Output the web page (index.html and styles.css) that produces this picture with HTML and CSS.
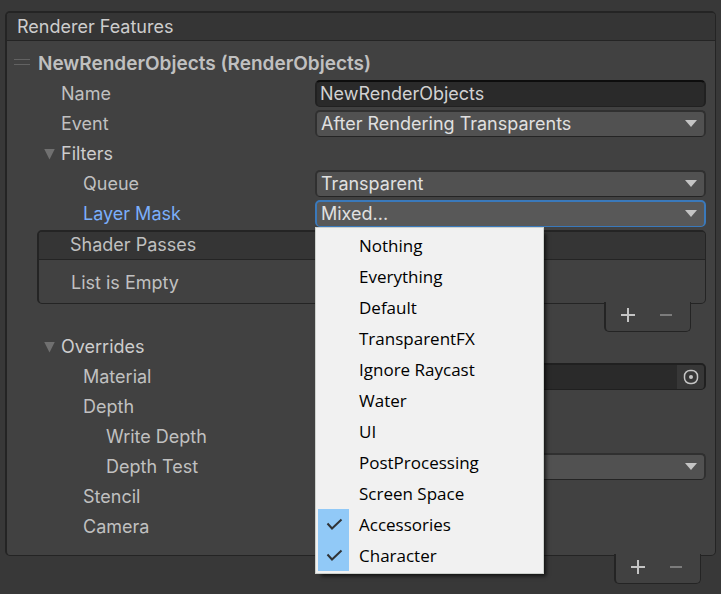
FILE: index.html
```html
<!DOCTYPE html>
<html lang="en">
<head>
<meta charset="utf-8">
<title>Renderer Features</title>
<link rel="stylesheet" href="styles.css">
</head>
<body>
<main class="inspector">
  <section class="panel">
    <h1 class="panel-header">Renderer Features</h1>
    <div class="panel-body">
      <div class="feature-title">
        <span class="drag-handle"></span>
        <h2>NewRenderObjects (RenderObjects)</h2>
      </div>
      <div class="row">
        <label class="level-1" for="name">Name</label>
        <input class="field text-field" id="name" type="text" value="NewRenderObjects">
      </div>
      <div class="row">
        <label class="level-1" for="event">Event</label>
        <div class="dropdown">
          <select class="field" id="event"><option>After Rendering Transparents</option></select>
        </div>
      </div>
      <button class="foldout" type="button" aria-expanded="true">Filters</button>
      <div class="row">
        <label class="level-2" for="queue">Queue</label>
        <div class="dropdown">
          <select class="field" id="queue"><option>Transparent</option></select>
        </div>
      </div>
      <div class="row active">
        <label class="level-2" for="mask">Layer Mask</label>
        <div class="dropdown">
          <select class="field" id="mask"><option>Mixed...</option></select>
          <div class="menu" role="menu">
            <button type="button" role="menuitemcheckbox" aria-checked="false"><span class="check"></span>Nothing</button>
            <button type="button" role="menuitemcheckbox" aria-checked="false"><span class="check"></span>Everything</button>
            <button type="button" role="menuitemcheckbox" aria-checked="false"><span class="check"></span>Default</button>
            <button type="button" role="menuitemcheckbox" aria-checked="false"><span class="check"></span>TransparentFX</button>
            <button type="button" role="menuitemcheckbox" aria-checked="false"><span class="check"></span>Ignore Raycast</button>
            <button type="button" role="menuitemcheckbox" aria-checked="false"><span class="check"></span>Water</button>
            <button type="button" role="menuitemcheckbox" aria-checked="false"><span class="check"></span>UI</button>
            <button type="button" role="menuitemcheckbox" aria-checked="false"><span class="check"></span>PostProcessing</button>
            <button type="button" role="menuitemcheckbox" aria-checked="false"><span class="check"></span>Screen Space</button>
            <button type="button" role="menuitemcheckbox" aria-checked="true"><span class="check"><svg width="31" height="31" viewBox="0 0 31 31"><path d="M9.500 14.500L14 19.500L23.500 10.500"/></svg></span>Accessories</button>
            <button type="button" role="menuitemcheckbox" aria-checked="true"><span class="check"><svg width="31" height="31" viewBox="0 0 31 31"><path d="M9.500 14.500L14 19.500L23.500 10.500"/></svg></span>Character</button>
          </div>
        </div>
      </div>
      <div class="list">
        <h3 class="list-header">Shader Passes</h3>
        <p class="list-empty">List is Empty</p>
      </div>
      <div class="tab list-tab">
        <button type="button" aria-label="Add shader pass"><svg width="16" height="16" viewBox="0 0 16 16"><path d="M8 1V15M1 8H15"/></svg></button>
        <button type="button" aria-label="Remove shader pass" class="dim"><svg width="16" height="16" viewBox="0 0 16 16"><path d="M2 8H14"/></svg></button>
      </div>
      <button class="foldout" type="button" aria-expanded="true">Overrides</button>
      <div class="row">
        <label class="level-2" for="material">Material</label>
        <div class="field object-field">
          <input id="material" type="text">
          <button type="button" aria-label="Pick material"><svg width="16" height="16" viewBox="0 0 16 16"><rect x="1.500" y="1.500" width="13" height="13" rx="5.500"/><circle class="dot" cx="8" cy="8" r="2"/></svg></button>
        </div>
      </div>
      <div class="row"><span class="level-2">Depth</span></div>
      <div class="row"><span class="level-3">Write Depth</span></div>
      <div class="row">
        <label class="level-3" for="test">Depth Test</label>
        <div class="dropdown">
          <select class="field" id="test"><option></option></select>
        </div>
      </div>
      <div class="row"><span class="level-2">Stencil</span></div>
      <div class="row"><span class="level-2">Camera</span></div>
    </div>
  </section>
  <div class="tab panel-tab">
    <button type="button" aria-label="Add renderer feature"><svg width="16" height="16" viewBox="0 0 16 16"><path d="M8 1V15M1 8H15"/></svg></button>
    <button type="button" aria-label="Remove renderer feature" class="dim"><svg width="16" height="16" viewBox="0 0 16 16"><path d="M2 8H14"/></svg></button>
  </div>
</main>
</body>
</html>
```
FILE: styles.css
```css
* {
  box-sizing: border-box;
}

body {
  margin: 0;
  background: #383838;
  color: #c0c0c0;
  font: 18px/28px Inter, "Liberation Sans", sans-serif;
}

h1, h2, h3, p {
  margin: 0;
  font: inherit;
}

button, input, select {
  margin: 0;
  padding: 0;
  border: 0;
  background: none;
  color: inherit;
  font: inherit;
}

.inspector {
  padding: 11px 5px 10px;
}

.panel, .list {
  border: solid #242424;
  border-width: 2px 1px 1px 2px;
  border-radius: 5px;
  background: #414141;
}

.panel-header, .list-header {
  height: 28px;
  border-bottom: 1px solid #242424;
  border-radius: 3px 3px 0 0;
  background: #353535;
}

.panel-header {
  padding-left: 10px;
  color: #cdcdcd;
}

.panel-body {
  padding: 8px 9px 13px 0;
}

.feature-title {
  display: flex;
  gap: 8px;
  height: 30px;
  padding-left: 7px;
}

.feature-title h2 {
  font-size: 19px;
  font-weight: 600;
  line-height: 30px;
}

.drag-handle {
  width: 16px;
  height: 6px;
  margin-top: 10px;
  border: solid #626262;
  border-width: 1px 0;
}

.row {
  display: grid;
  grid-template: 27px / 308px 1fr;
  height: 30px;
  padding: 1px 0 2px;
}

.level-1 {
  padding-left: 54px;
}

.level-2 {
  padding-left: 76px;
}

.level-3 {
  padding-left: 99px;
}

.active > label {
  color: #7baefa;
}

.field {
  width: 100%;
  height: 27px;
  border: solid #292929;
  border-width: 2px 2px 1px;
  border-radius: 5px;
}

.text-field {
  padding-left: 3px;
  border-color: #0d0d0d #212121 #212121;
  background: #2a2a2a;
  color: #d2d2d2;
}

.dropdown {
  position: relative;
}

.dropdown::after {
  content: "";
  position: absolute;
  top: 10px;
  right: 9px;
  width: 12px;
  height: 7px;
  background: #c4c4c4;
  clip-path: polygon(0 0, 100% 0, 50% 100%);
  pointer-events: none;
}

select.field {
  display: block;
  appearance: none;
  padding-left: 4px;
  border-color: #303030 #303030 #242424;
  background: #515151;
  color: #e0e0e0;
  line-height: 24px;
}

.active select.field {
  border-color: #3a79bb;
  background: #585858;
}

.foldout {
  display: flex;
  align-items: center;
  gap: 6px;
  height: 30px;
  padding-left: 37px;
  color: #cdcdcd;
}

.foldout::before {
  content: "";
  width: 11px;
  height: 11px;
  background: #707070;
  clip-path: polygon(0 0, 100% 0, 50% 100%);
}

.menu {
  position: absolute;
  z-index: 1;
  top: 100%;
  left: 0;
  width: 229px;
  padding: 2px;
  border: 1px solid #ccd0cc;
  background: #f1f1f1;
  box-shadow: 4px 4px 4px -2px #000000b0;
  color: #000;
  font: 17px/31px "Open Sans", "Noto Sans", sans-serif;
}

.menu button {
  display: flex;
  gap: 10px;
  width: 100%;
  height: 31px;
}

.check {
  width: 31px;
  height: 31px;
}

[aria-checked="true"] .check {
  background: #91c9f7;
}

svg {
  display: block;
  fill: none;
  stroke: #c4c4c4;
  stroke-width: 2;
}

.check svg {
  stroke: #303336;
}

.list {
  margin: 1px 0 0 30px;
}

.list-header {
  padding-left: 31px;
  line-height: 26px;
}

.list-empty {
  height: 43px;
  padding: 9px 0 0 32px;
}

.tab {
  position: relative;
  display: flex;
  width: 87px;
  height: 30px;
  margin: -2px 15px 0 auto;
  padding-left: 3px;
  border: solid #242424;
  border-width: 0 1px 1px 2px;
  border-radius: 0 0 5px 5px;
  background: #414141;
}

.tab button {
  display: grid;
  place-items: center;
  width: 38px;
  height: 26px;
}

.tab .dim svg {
  stroke: #7c7c7c;
}

.object-field {
  display: flex;
  overflow: hidden;
  border-color: #202020;
  background: #2a2a2a;
}

.object-field input {
  flex: 1;
  min-width: 0;
}

.object-field button {
  display: grid;
  place-items: center;
  width: 27px;
  background: #373737;
}

.object-field svg {
  stroke-width: 1.500;
}

.object-field .dot {
  fill: #c4c4c4;
  stroke: none;
}
```
